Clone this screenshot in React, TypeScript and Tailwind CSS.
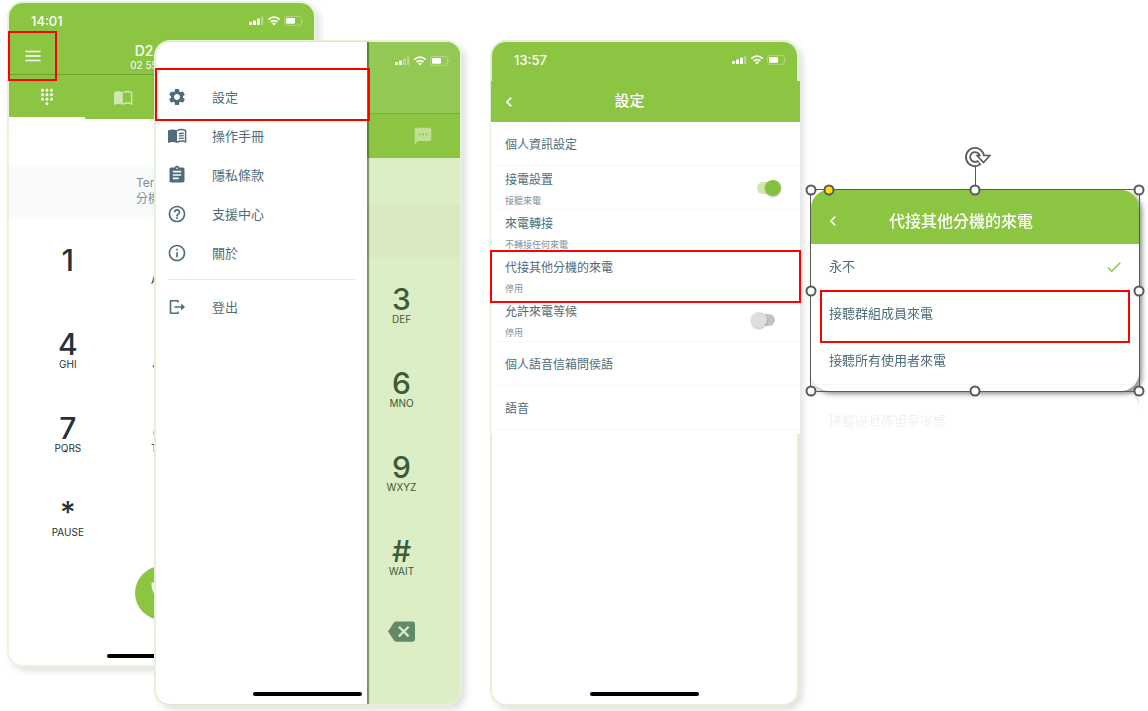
import type { ReactNode } from "react";
import {
  MdAssignment,
  MdBackspace,
  MdCall,
  MdCheck,
  MdDialpad,
  MdHelpOutline,
  MdInfoOutline,
  MdKeyboardArrowLeft,
  MdSettings,
  MdSms,
} from "react-icons/md";

type Key = { digit: string; letters?: string };

const leftKeys: Key[] = [
  { digit: "1" },
  { digit: "4", letters: "GHI" },
  { digit: "7", letters: "PQRS" },
  { digit: "*", letters: "PAUSE" },
];
const middleKeys: Key[] = [
  { digit: "2", letters: "ABC" },
  { digit: "5", letters: "JKL" },
  { digit: "8", letters: "TUV" },
];
const rightKeys: Key[] = [
  { digit: "3", letters: "DEF" },
  { digit: "6", letters: "MNO" },
  { digit: "9", letters: "WXYZ" },
  { digit: "#", letters: "WAIT" },
];

function StatusIcons({ bars = 3 }: { bars?: number }) {
  return (
    <svg viewBox="0 0 55 12" className="h-3 w-[55px] shrink-0" fill="#fff" aria-hidden="true">
      <rect x="0" y="7" width="3" height="3" rx="0.7" />
      <rect x="4" y="5.5" width="3" height="4.5" rx="0.7" />
      <rect x="8" y="3.5" width="3" height="6.5" rx="0.7" opacity={bars > 2 ? 1 : 0.35} />
      <rect x="12" y="1.5" width="2.4" height="8.5" rx="0.7" opacity="0.35" />
      <g fill="none" stroke="#fff" strokeWidth="1.8">
        <path d="M19.3 4.600a8 8 0 0 1 11.400 0" />
        <path d="M21.600 7a4.800 4.800 0 0 1 6.800 0" />
      </g>
      <path d="M25 10.600l-2-2.100a2.900 2.900 0 0 1 4 0z" />
      <rect x="35.5" y="1.5" width="17" height="8.8" rx="2.4" fill="none" stroke="#fff" strokeOpacity="0.3" />
      <rect x="37" y="3" width="9" height="5.800" rx="1" />
      <path d="M53.500 4.500c1 .3 1 2.500 0 2.800z" opacity="0.5" />
    </svg>
  );
}

function Keypad({ keys, tone }: { keys: Key[]; tone: string }) {
  return (
    <div className={`flex flex-col items-center gap-11 ${tone}`}>
      {keys.map((key) => (
        <button key={key.digit} type="button" className="flex h-10 flex-col items-center">
          <span className="text-[30px] leading-7 font-medium">{key.digit}</span>
          <span className="text-[10px] leading-3">{key.letters}</span>
        </button>
      ))}
    </div>
  );
}

function ContactsIcon() {
  return (
    <svg viewBox="0 0 20 16" className="h-4 w-5" aria-hidden="true">
      <path d="M1 2.500C3.500 1 7.500 1 9.800 2.300V15C7.500 13.600 3.500 13.600 1 15z" fill="#fff" />
      <path d="M10.200 2.500C12.500 1.200 16.500 1.200 18.600 2.500V14C16.500 13 12.500 13 10.200 14" fill="none" stroke="#fff" strokeWidth="1.400" />
    </svg>
  );
}

function ManualIcon() {
  return (
    <svg viewBox="0 0 20 16" className="h-4 w-5" fill="none" stroke="currentColor" aria-hidden="true">
      <path d="M1 2.500C3.500 1 7.500 1 10 2.500V15C7.500 13.600 3.500 13.600 1 15z" fill="currentColor" stroke="none" />
      <path d="M9.800 2.600C12.500 1.300 16.500 1.300 18.600 2.600V13.900C16.500 13 12.500 13 9.800 14.200" strokeWidth="1.500" />
      <path d="M11.800 5.800q2.500-.9 5-.3M11.800 8.200q2.500-.9 5-.3M11.800 10.600q2.500-.9 5-.3" strokeWidth="1.300" />
    </svg>
  );
}

function LogoutIcon() {
  return (
    <svg viewBox="0 0 18 18" className="size-[18px]" fill="none" stroke="currentColor" strokeWidth="1.600" strokeLinejoin="round" aria-hidden="true">
      <path d="M10 4.500V2.800H2.500v12.400H10v-1.700M6.500 9h7.500" />
      <path d="M13.200 5.600L17 9l-3.800 3.400z" fill="currentColor" stroke="none" />
    </svg>
  );
}

function HomeBar() {
  return <div className="h-1 w-[109px] rounded-full bg-black" />;
}

function DialerPhone() {
  return (
    <section className="col-start-1 col-end-3 row-start-1 mt-px flex h-[666px] min-w-0 flex-col rounded-[16px] border-2 border-[#e6f5dc] bg-white shadow-[4px_4px_7px_rgba(0,0,0,0.12)]">
      <header className="rounded-t-[14px] bg-[#8bc541] text-white">
        <div className="flex h-[26px] items-end justify-between pr-2.5 pl-[22px]">
          <span className="text-[13px] leading-4 font-medium">14:01</span>
          <div className="pb-0.5"><StatusIcons /></div>
        </div>
        <div className="flex h-[46px] border-b border-[#6fa333]">
          <div className="relative flex w-12 items-center justify-center pt-2">
            <button type="button" aria-label="選單">
              <svg viewBox="0 0 16 12" className="h-3 w-4" stroke="#fff" strokeWidth="1.700" aria-hidden="true">
                <path d="M0.500 1.500h15M0.500 6h15M0.500 10.500h15" />
              </svg>
            </button>
            <div className="absolute top-0.5 right-0 -bottom-[7px] -left-px border-2 border-[#f00]" />
          </div>
          <div className="flex w-[174px] flex-col items-center justify-end pb-[3px]">
            <span className="text-[14px] leading-4 font-medium">D2</span>
            <span className="text-[10px] leading-3">02 55</span>
          </div>
        </div>
        <nav className="grid h-11 grid-cols-4">
          <button type="button" aria-label="撥號鍵盤" className="flex items-center justify-center border-b-2 border-white pt-0.5">
            <MdDialpad size={18} />
          </button>
          <button type="button" aria-label="通訊錄" className="flex items-center justify-center pt-0.5 opacity-60">
            <ContactsIcon />
          </button>
        </nav>
      </header>
      <div className="mt-[46px] bg-[#f9fafa] pl-[127px] text-[12px] leading-4 text-[#7b8f9a]">
        <div className="flex h-[52px] flex-col justify-center">
          <span>Ter</span>
          <span>分機</span>
        </div>
      </div>
      <div className="mt-[29px] grid grid-cols-3 px-3">
        <Keypad keys={leftKeys} tone="text-[#263238]" />
        <Keypad keys={middleKeys} tone="text-[#263238]" />
      </div>
      <div className="mt-auto flex flex-col items-center gap-[34px] pb-[7px]">
        <button type="button" aria-label="撥打" className="flex size-[54px] items-center justify-center rounded-full bg-[#8bc541] text-white">
          <MdCall size={28} />
        </button>
        <HomeBar />
      </div>
    </section>
  );
}

function MenuItem({ icon, label }: { icon: ReactNode; label: string }) {
  return (
    <a href="#" className="flex h-[39px] items-center">
      <span className="flex w-[42px] justify-center">{icon}</span>
      <span className="pl-3.5 text-[13px] leading-5">{label}</span>
    </a>
  );
}

function DrawerPhone() {
  return (
    <section className="relative col-start-2 col-end-4 row-start-1 mt-10 flex h-[666px] min-w-0 rounded-[16px] border-2 border-[#e3f3d8] bg-[#dbeec6] shadow-[4px_4px_7px_rgba(0,0,0,0.12)]">
      <aside className="relative z-10 flex w-[211px] shrink-0 flex-col rounded-l-[14px] bg-white pt-[35px] text-[#4f6c79] shadow-[2px_0_1px_rgba(60,80,40,0.6)]">
        <nav>
          <div className="relative">
            <MenuItem icon={<MdSettings size={20} />} label="設定" />
            <div className="absolute -top-[9px] -right-[3px] -left-px h-[53px] border-2 border-[#f00]" />
          </div>
          <MenuItem icon={<ManualIcon />} label="操作手冊" />
          <MenuItem icon={<MdAssignment size={20} />} label="隱私條款" />
          <MenuItem icon={<MdHelpOutline size={20} />} label="支援中心" />
          <MenuItem icon={<MdInfoOutline size={20} />} label="關於" />
          <hr className="mx-3 my-[7px] border-[#e3e6e8]" />
          <MenuItem icon={<LogoutIcon />} label="登出" />
        </nav>
        <div className="mt-auto flex justify-end pr-[5px] pb-2">
          <HomeBar />
        </div>
      </aside>
      <div className="flex min-w-0 flex-1 flex-col">
        <header className="rounded-tr-[14px] bg-[#8bc541]">
          <div className="flex h-[72px] justify-end rounded-tr-[14px] border-b border-[#78ad3a] bg-[#94c854] pt-[13px] pr-2.5">
            <StatusIcons bars={2} />
          </div>
          <div className="flex h-11 items-center justify-end pr-[27px] text-white/45">
            <MdSms size={20} />
          </div>
        </header>
        <div className="mt-[47px] h-[52px] bg-[#d9e8c1]" />
        <div className="mt-7 pr-6">
          <Keypad keys={rightKeys} tone="text-[#3d5b36]" />
        </div>
        <button type="button" aria-label="刪除" className="mt-[41px] flex justify-center pr-6 text-[#64896a]">
          <MdBackspace size={27} />
        </button>
      </div>
    </section>
  );
}

function BackBar({ title, className }: { title: string; className: string }) {
  return (
    <header className={`flex items-center bg-[#8bc541] text-white ${className}`}>
      <button type="button" aria-label="返回" className="-mr-9 flex w-9 justify-center">
        <MdKeyboardArrowLeft size={20} />
      </button>
      <h2 className="flex-1 text-center font-medium">{title}</h2>
    </header>
  );
}

type Setting = { title: string; note?: string; toggle?: "on" | "off"; marked?: boolean };

const settings: Setting[] = [
  { title: "個人資訊設定" },
  { title: "接電設置", note: "接聽來電", toggle: "on" },
  { title: "來電轉接", note: "不轉接任何來電" },
  { title: "代接其他分機的來電", note: "停用", marked: true },
  { title: "允許來電等候", note: "停用", toggle: "off" },
  { title: "個人語音信箱問侯語" },
  { title: "語音" },
];

function SettingRow({ title, note, toggle, marked }: Setting) {
  const text = (
    <span className="flex flex-1 flex-col pt-0.5 text-left">
      <span className="text-[12px] leading-5">{title}</span>
      {note && <span className="-mb-1 text-[9px] leading-[22px] text-[#7d919b]">{note}</span>}
    </span>
  );
  return (
    <li className="relative flex h-11 border-b border-[#f6f7f7] pr-[25px] pl-[14px]">
      {toggle ? (
        <label className="flex flex-1 items-center">
          {text}
          <input type="checkbox" role="switch" defaultChecked={toggle === "on"} className="peer sr-only" />
          <span className="flex h-3 w-[18px] items-center rounded-full bg-[#c4c4c4] *:-translate-x-1.5 *:bg-[#dedede] peer-checked:bg-[#cde7ae] peer-checked:*:translate-x-2 peer-checked:*:bg-[#86c13d]">
            <span className="size-4 shrink-0 rounded-full shadow-[0_1px_2px_rgba(0,0,0,0.25)]" />
          </span>
        </label>
      ) : (
        <button type="button" className="flex flex-1 items-center">{text}</button>
      )}
      {marked && <div className="absolute -inset-x-px -top-1 -bottom-1.5 z-10 border-2 border-[#f00]" />}
    </li>
  );
}

function SettingsPhone() {
  return (
    <section className="col-start-5 row-start-1 mt-10 flex h-[666px] min-w-0 flex-col rounded-[16px] border-2 border-[#e3f1d9] bg-white shadow-[4px_4px_7px_rgba(0,0,0,0.12)]">
      <div className="flex h-[39px] items-center justify-between rounded-t-[14px] bg-[#8bc541] pr-2.5 pb-[3px] pl-[22px] text-white">
        <span className="text-[13px] leading-4 font-medium">13:57</span>
        <StatusIcons />
      </div>
      <div className="-mr-[3px] -ml-px bg-white pb-1 text-[#4f6c79]">
        <BackBar title="設定" className="h-[41px] pr-8 text-[15px]" />
        <ul>
          {settings.map((item) => (
            <SettingRow key={item.title} {...item} />
          ))}
        </ul>
      </div>
      <div className="mt-auto flex justify-center pb-2">
        <HomeBar />
      </div>
    </section>
  );
}

function Handle({ place }: { place: string }) {
  return <span className={`absolute size-[11px] -translate-1/2 rounded-full border-2 border-[#595959] ${place}`} />;
}

function PickupCard() {
  return (
    <section className="relative col-start-7 row-start-1 mt-[190px] min-w-0 self-start">
      <div className="overflow-hidden rounded-[18px] bg-white pb-1.5 text-[#4f6c79] shadow-[3px_3px_5px_rgba(0,0,0,0.45)] [-webkit-box-reflect:below_0px_linear-gradient(transparent_75%,rgba(0,0,0,0.25))]">
        <BackBar title="代接其他分機的來電" className="h-[54px] pt-2 pr-8 pl-1 text-[16px]" />
        <ul className="text-[13px]">
          {["永不", "接聽群組成員來電", "接聽所有使用者來電"].map((label, index) => (
            <li key={label} className="h-[47px] border-b border-[#f8f8f8]">
              <button type="button" className="flex size-full items-center justify-between pr-4 pl-[18px]">
                {label}
                {index === 0 && <MdCheck size={18} className="text-[#8bc541]" />}
              </button>
            </li>
          ))}
        </ul>
      </div>
      <div className="absolute inset-x-[9px] top-[100px] h-[53px] border-2 border-[#f00]" />
      <div className="pointer-events-none absolute -inset-px border border-[#595959]">
        <span className="absolute -top-6 left-1/2 h-6 w-px bg-[#595959]" />
        <Handle place="top-0 left-0 bg-white" />
        <Handle place="top-0 left-1/2 bg-white" />
        <Handle place="top-0 left-full bg-white" />
        <Handle place="top-1/2 left-0 bg-white" />
        <Handle place="top-1/2 left-full bg-white" />
        <Handle place="top-full left-0 bg-white" />
        <Handle place="top-full left-1/2 bg-white" />
        <Handle place="top-full left-full bg-white" />
        <Handle place="top-0 left-[18px] bg-[#ffe100]" />
        <svg viewBox="0 0 28 24" className="absolute -top-[45px] left-1/2 h-6 w-7 -translate-x-3" aria-hidden="true">
          <path d="M16.500 17.300A7 7 0 1 1 19 12" fill="none" stroke="#595959" strokeWidth="6" />
          <path d="M14 10.500h13l-6.500 7z" fill="#fff" stroke="#595959" strokeWidth="1.600" />
          <path d="M15.600 18A7 7 0 1 1 19 12.500" fill="none" stroke="#fff" strokeWidth="2.400" />
        </svg>
      </div>
    </section>
  );
}

export default function App() {
  return (
    <main className="grid min-h-screen grid-cols-[147fr_162fr_146fr_28fr_309fr_12fr_328fr] content-start items-start overflow-hidden bg-white pr-[9px] pl-[7px] font-['Inter','Noto_Sans_CJK_TC',sans-serif]">
      <DialerPhone />
      <DrawerPhone />
      <SettingsPhone />
      <PickupCard />
    </main>
  );
}
